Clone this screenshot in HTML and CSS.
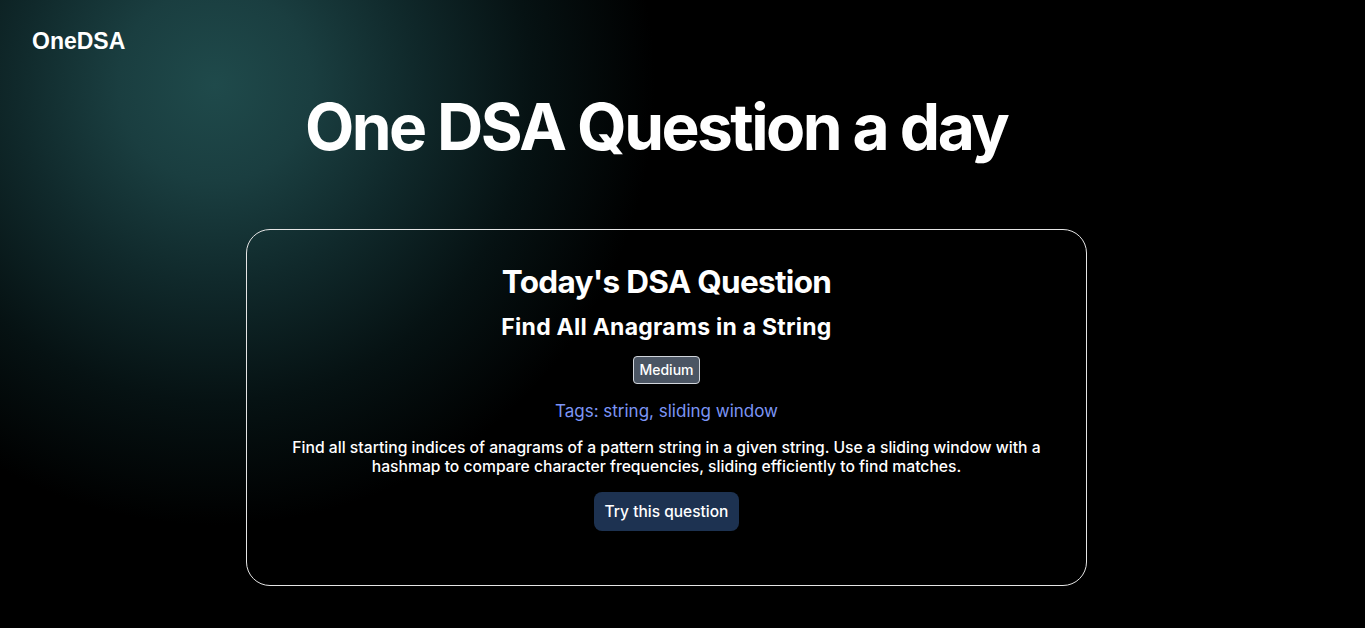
FILE: index.html
```html
<!DOCTYPE html>
<html lang="en">
<head>
<meta charset="utf-8">
<title>OneDSA</title>
<link rel="stylesheet" href="styles.css">
</head>
<body>
<div class="page">
  <header class="topbar">
    <a class="logo" href="#">OneDSA</a>
  </header>
  <main class="main">
    <h1 class="hero">One DSA Question a day</h1>
    <section class="card">
      <h2 class="card-title">Today's DSA Question</h2>
      <h3 class="q-title">Find All Anagrams in a String</h3>
      <span class="badge">Medium</span>
      <p class="tags">Tags: string, sliding window</p>
      <p class="desc">Find all starting indices of anagrams of a pattern string in a given string. Use a sliding window with a hashmap to compare character frequencies, sliding efficiently to find matches.</p>
      <a class="btn" href="#">Try this question</a>
    </section>
  </main>
</div>
</body>
</html>
```
FILE: styles.css
```css
* { box-sizing: border-box; }
html, body { margin: 0; padding: 0; height: 100%; }
body {
  background-color: #000;
  background-image: radial-gradient(circle 440px at 215px 85px, #1f4a4b 0%, #1a3e40 22%, #10292b 45%, #061213 72%, rgba(0,0,0,0) 100%);
  background-repeat: no-repeat;
  color: #fff;
  font-family: Inter, "Noto Sans", sans-serif;
  overflow: hidden;
}
.page { min-height: 100%; }
.topbar { padding: 28px 32px 0; height: 64px; }
.logo {
  font-family: "Liberation Sans", Arial, sans-serif;
  font-weight: 700;
  font-size: 23px;
  color: #fff;
  text-decoration: none;
}
.main {
  display: flex;
  flex-direction: column;
  align-items: center;
  padding-right: 32px;
}
.hero {
  margin: 25px 0 0;
  padding-right: 21px;
  font-size: 64px;
  line-height: 1.2;
  font-weight: 700;
  letter-spacing: -2.55px;
}
.card {
  margin-top: 63px;
  width: 841px;
  height: 357px;
  border: 1px solid #e5e5e5;
  border-radius: 24px;
  padding: 32px 40px;
  display: flex;
  flex-direction: column;
  align-items: center;
  text-align: center;
}
.card-title { margin: 0; font-size: 31.5px; line-height: 40px; font-weight: 700; letter-spacing: -0.7px; }
.q-title { margin: 11px 0 0; font-size: 23px; line-height: 29px; font-weight: 700; letter-spacing: 0.25px; }
.badge {
  margin-top: 14px;
  display: inline-block;
  background: #4b5563;
  border: 1px solid #d1d5db;
  border-radius: 4px;
  padding: 4px 5px;
  font-size: 14px;
  line-height: 18px;
  font-weight: 500;
}
.tags { margin: 16px 0 0; color: #7c95f5; font-size: 17px; line-height: 22px; }
.desc { margin: 16px 0 0; font-size: 15.7px; line-height: 19px; font-weight: 500; max-width: 770px; }
.btn {
  margin-top: 16px;
  display: inline-block;
  background: #1d3251;
  color: #fff;
  text-decoration: none;
  border-radius: 8px;
  padding: 9px 11px;
  font-size: 15.5px;
  line-height: 21px;
  font-weight: 500;
}
```
